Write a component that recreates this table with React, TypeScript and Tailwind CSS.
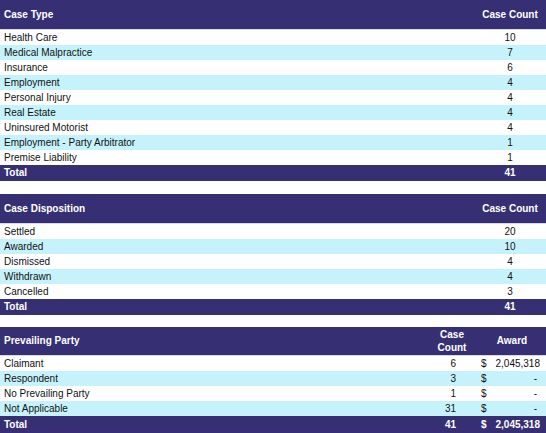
import React from "react";

const FONT = "font-['Liberation_Sans',Arial,sans-serif]";

type Row = { label: string; count: number };

const CASE_TYPES: Row[] = [
  { label: "Health Care", count: 10 },
  { label: "Medical Malpractice", count: 7 },
  { label: "Insurance", count: 6 },
  { label: "Employment", count: 4 },
  { label: "Personal Injury", count: 4 },
  { label: "Real Estate", count: 4 },
  { label: "Uninsured Motorist", count: 4 },
  { label: "Employment - Party Arbitrator", count: 1 },
  { label: "Premise Liability", count: 1 },
];

const DISPOSITIONS: Row[] = [
  { label: "Settled", count: 20 },
  { label: "Awarded", count: 10 },
  { label: "Dismissed", count: 4 },
  { label: "Withdrawn", count: 4 },
  { label: "Cancelled", count: 3 },
];

const PARTIES = [
  { label: "Claimant", count: 6, award: "2,045,318" },
  { label: "Respondent", count: 3, award: "" },
  { label: "No Prevailing Party", count: 1, award: "" },
  { label: "Not Applicable", count: 31, award: "" },
];

function CountTable({ title, rows, total }: { title: string; rows: Row[]; total: number }) {
  return (
    <div>
      <div className="flex h-[30px] items-center border-b border-[#d9d7ea] bg-[#372f73] pl-[4px] pr-[4px] font-bold text-white">
        <span className="flex-1">{title}</span>
        <span className="w-[64px] text-center">Case Count</span>
      </div>
      {rows.map((r, i) => (
        <div
          key={r.label}
          className={`flex h-[15px] items-center pl-[4px] pr-[4px] text-[#111] ${i % 2 ? "bg-[#c6f3fb]" : "bg-white"}`}
        >
          <span className="flex-1">{r.label}</span>
          <span className="w-[64px] text-center">{r.count}</span>
        </div>
      ))}
      <div className="flex h-[16px] items-center bg-[#372f73] pl-[4px] pr-[4px] font-bold text-white">
        <span className="flex-1">Total</span>
        <span className="w-[64px] text-center">{total}</span>
      </div>
    </div>
  );
}

export default function App() {
  return (
    <div className={`${FONT} w-[546px] h-[433px] overflow-hidden bg-white text-[10px] leading-none`}>
      <CountTable title="Case Type" rows={CASE_TYPES} total={41} />
      <div className="h-[13px]" />
      <CountTable title="Case Disposition" rows={DISPOSITIONS} total={41} />
      <div className="h-[12px]" />

      {/* Prevailing party */}
      <div>
        <div className="flex h-[29px] items-center border-b border-[#d9d7ea] bg-[#372f73] pl-[4px] font-bold text-white">
          <span className="flex-1">Prevailing Party</span>
          <span className="w-[52px] text-center leading-[13px]">
            Case
            <br />
            Count
          </span>
          <span className="w-[68px] text-center">Award</span>
        </div>
        {PARTIES.map((p, i) => (
          <div
            key={p.label}
            className={`flex h-[15px] items-center pl-[4px] text-[#111] ${i % 2 ? "bg-[#c6f3fb]" : "bg-white"}`}
          >
            <span className="flex-1">{p.label}</span>
            <span className="w-[52px] pr-[22px] text-right">{p.count}</span>
            <span className="w-[14px] pl-[3px]">$</span>
            <span className={`w-[54px] text-right ${p.award ? "pr-[6px]" : "pr-[9px]"}`}>{p.award || "-"}</span>
          </div>
        ))}
        <div className="flex h-[17px] items-center bg-[#372f73] pl-[4px] font-bold text-white">
          <span className="flex-1">Total</span>
          <span className="w-[52px] pr-[22px] text-right">41</span>
          <span className="w-[14px] pl-[3px]">$</span>
          <span className="w-[54px] pr-[6px] text-right">2,045,318</span>
        </div>
      </div>
    </div>
  );
}
